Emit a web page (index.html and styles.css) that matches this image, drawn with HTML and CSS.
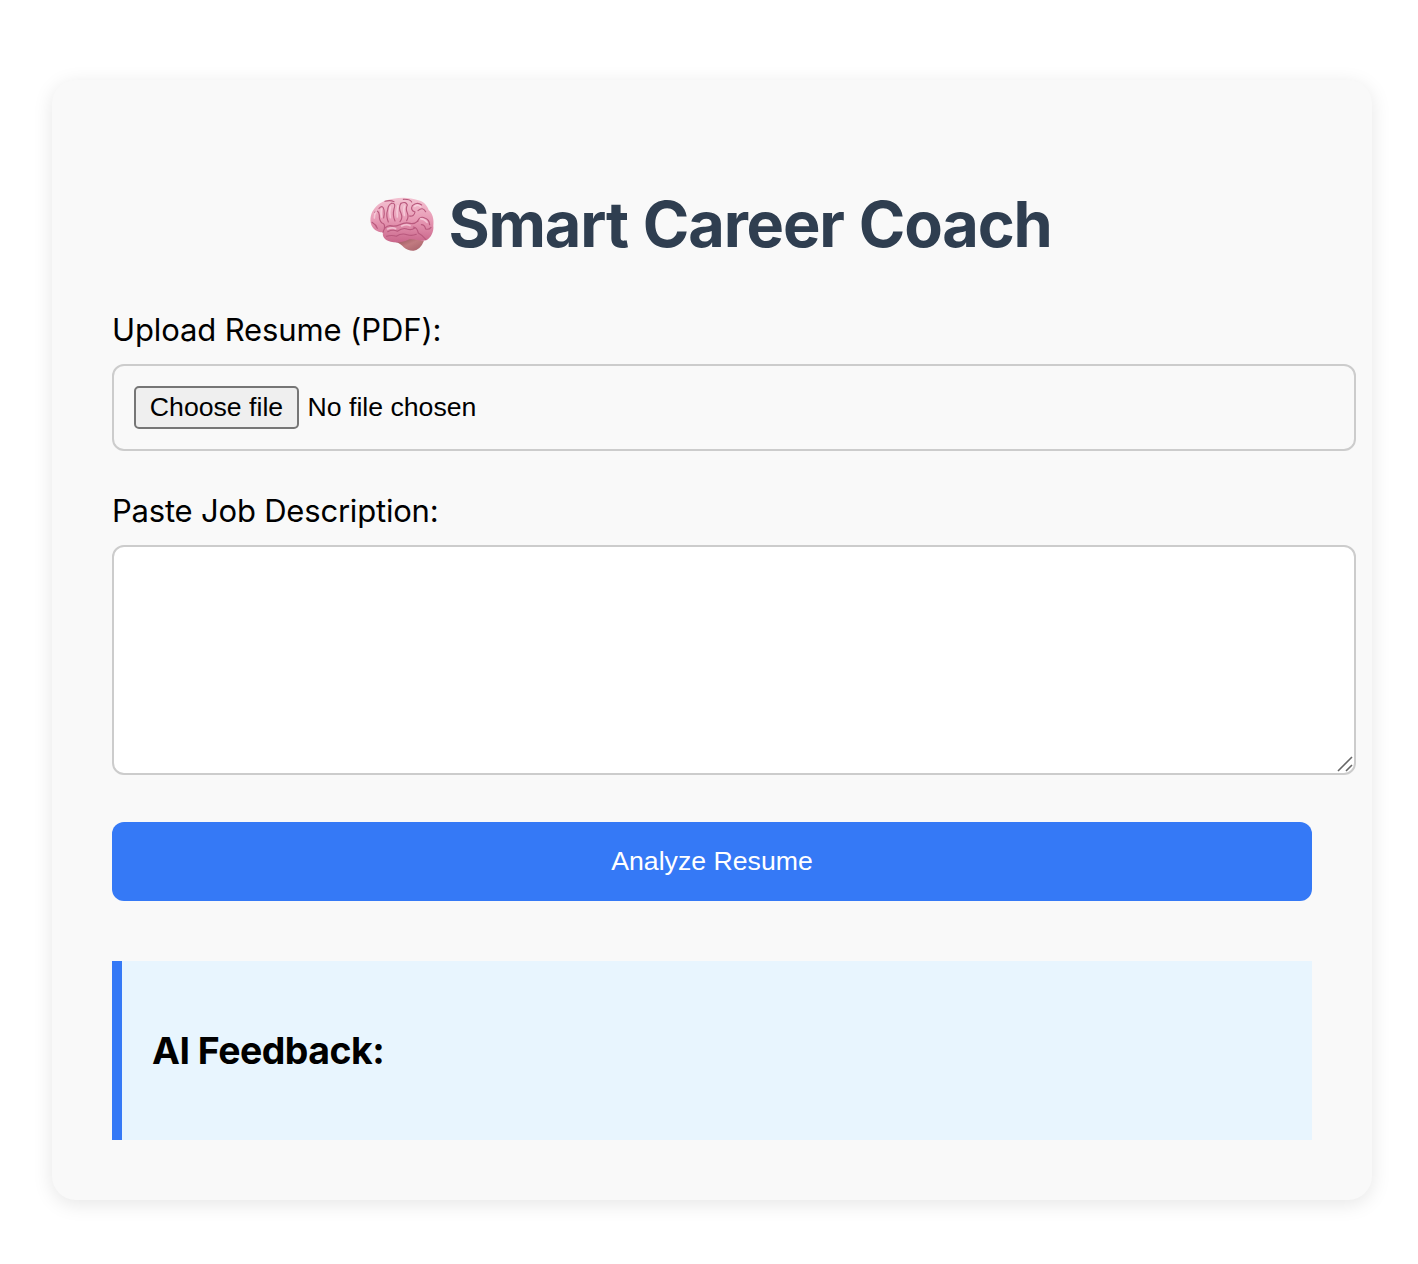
FILE: index.html
```html
<!DOCTYPE html>
<html lang="en">
<head>
<meta charset="utf-8">
<title>Smart Career Coach</title>
<link rel="stylesheet" href="styles.css">
</head>
<body>
<main class="card">
  <h1 class="title">
    <svg class="brain" viewBox="0 0 270 225" aria-hidden="true">
      <defs>
        <linearGradient id="cortex" x1="0.5" y1="0" x2="0.5" y2="1">
          <stop offset="0" stop-color="#f3c3d2"/>
          <stop offset="0.5" stop-color="#e799b4"/>
          <stop offset="1" stop-color="#c9668a"/>
        </linearGradient>
        <linearGradient id="stem" x1="0" y1="0" x2="1" y2="1">
          <stop offset="0" stop-color="#8d4950"/>
          <stop offset="0.5" stop-color="#c17b80"/>
          <stop offset="1" stop-color="#a55f69"/>
        </linearGradient>
      </defs>
      <path fill="url(#stem)" d="M108 170Q127 176 134 187Q147 198 164 197Q185 193 195 167L150 158Z"/>
      <path fill="url(#cortex)" d="M72 142C56 143 43 133 37 120C31 102 36 83 47 70C58 54 79 44 103 41C129 36 157 38 178 46C193 49 205 62 209 75C220 84 226 103 223 122C225 140 216 158 202 166C185 171 164 160 148 164C130 173 111 174 95 170C77 167 69 154 72 142Z"/>
      <g class="folds">
        <path d="M72 142Q76 124 93 122Q108 126 122 119Q139 111 153 115Q164 119 177 108"/>
        <path d="M47 82Q59 72 61 91Q60 107 69 114Q79 117 76 130M39 112Q51 119 55 130"/>
        <path d="M60 70Q72 58 75 75Q77 87 74 99M88 111Q80 92 86 74Q88 59 98 55"/>
        <path d="M98 55Q112 53 105 72Q100 91 108 108M123 110Q132 100 126 85Q117 67 126 55"/>
        <path d="M126 55Q141 48 145 60Q139 72 145 84Q150 96 143 107"/>
        <path d="M151 93Q165 96 168 81Q153 75 160 62Q174 49 188 60M177 77Q191 64 200 80"/>
        <path d="M176 108Q184 92 197 99Q211 103 212 119M163 126Q174 127 178 144Q191 151 200 163"/>
        <path d="M86 140Q102 132 115 139Q132 127 144 132Q157 137 167 129M83 154Q98 149 112 154Q128 143 144 149Q158 154 172 148"/>
        <path d="M187 119Q197 119 200 132Q210 135 216 127M78 49Q94 44 105 50M133 43Q153 42 158 51"/>
      </g>
      <g class="shine">
        <path d="M52 78Q45 89 46 99M67 72Q65 86 68 96M94 66Q90 81 94 98M117 62Q112 77 115 96M136 63Q132 75 136 91M167 64Q177 56 185 65M185 101Q196 102 204 112M86 132Q99 126 110 131M128 123Q144 116 153 122"/>
      </g>
    </svg>
    <span class="title-text">Smart Career Coach</span>
  </h1>
  <form class="form">
    <label class="label upload-label" for="resume">Upload Resume (PDF):</label>
    <div class="file-field">
      <button class="file-button" id="resume" type="button">Choose file</button>
      <span class="file-name">No file chosen</span>
    </div>
    <label class="label job-label" for="job">Paste Job Description:</label>
    <div class="job-field">
      <textarea class="job-input" id="job"></textarea>
      <svg class="grip" viewBox="0 0 18 18" aria-hidden="true"><path d="M2 16L16 2M10 16L16 10"/></svg>
    </div>
    <button class="submit" type="button">Analyze Resume</button>
  </form>
  <section class="feedback">
    <h3 class="feedback-title">AI Feedback:</h3>
  </section>
</main>
</body>
</html>
```
FILE: styles.css
```css
* {
  box-sizing: border-box;
}

body {
  margin: 0;
  padding: 80px 46px 64px 52px;
  background: #fff;
  color: #000;
  font-family: Inter, "Liberation Sans", sans-serif;
}

.card {
  width: 1320px;
  height: 1120px;
  padding: 103px 60px 60px;
  background: #f9f9f9;
  border-radius: 24px;
  box-shadow: 0 4px 20px rgba(0, 0, 0, 0.1);
}

.title {
  display: flex;
  justify-content: center;
  height: 84px;
  margin: 0;
  color: #2f3e50;
  font-size: 63px;
  font-weight: 700;
  line-height: 82px;
  white-space: nowrap;
}

.brain {
  width: 90px;
  height: 75px;
  margin: 2px -1px 0 -13px;
}

.folds,
.shine {
  fill: none;
  stroke-linecap: round;
}

.folds {
  stroke: #b9597d;
  stroke-width: 3.4;
}

.shine {
  stroke: #fad7e2;
  stroke-width: 5;
  opacity: 0.7;
}

.title-text {
  letter-spacing: -1.2px;
  word-spacing: 1.4px;
}

.form {
  display: flex;
  flex-direction: column;
}

.label {
  height: 40px;
  font-size: 31px;
  line-height: 40px;
  white-space: nowrap;
}

.upload-label {
  margin-top: 43px;
  letter-spacing: -0.12px;
}

.file-field {
  display: flex;
  align-items: center;
  gap: 8.5px;
  width: 1244px;
  height: 87px;
  margin-top: 14px;
  padding: 0 20px;
  border: 2px solid #ccc;
  border-radius: 12px;
  font-family: "Liberation Sans", Arial, sans-serif;
  font-size: 26.67px;
}

.file-button {
  width: 165px;
  height: 43px;
  padding: 0;
  border: 2px solid #767676;
  border-radius: 5px;
  background: #efefef;
  color: #000;
  font: inherit;
}

.job-label {
  margin-top: 40px;
  letter-spacing: -0.2px;
}

.job-field {
  position: relative;
  width: 1244px;
  height: 230px;
  margin-top: 14px;
}

.job-input {
  display: block;
  width: 100%;
  height: 100%;
  padding: 20px;
  border: 2px solid #ccc;
  border-radius: 12px;
  background: #fff;
  resize: none;
}

.grip {
  position: absolute;
  right: 2px;
  bottom: 2px;
  width: 18px;
  height: 18px;
  fill: none;
  stroke: #666;
  stroke-width: 1.6;
}

.submit {
  height: 79px;
  margin-top: 47px;
  padding: 0;
  border: 0;
  border-radius: 12px;
  background: #3579f6;
  color: #fff;
  font-family: "Liberation Sans", Arial, sans-serif;
  font-size: 26.67px;
}

.feedback {
  height: 179px;
  margin-top: 60px;
  padding: 66px 30px 0;
  border-left: 10px solid #3579f6;
  background: #e8f5fe;
}

.feedback-title {
  margin: 0;
  font-size: 37.44px;
  font-weight: 700;
  letter-spacing: -0.5px;
  line-height: 48px;
}
```
